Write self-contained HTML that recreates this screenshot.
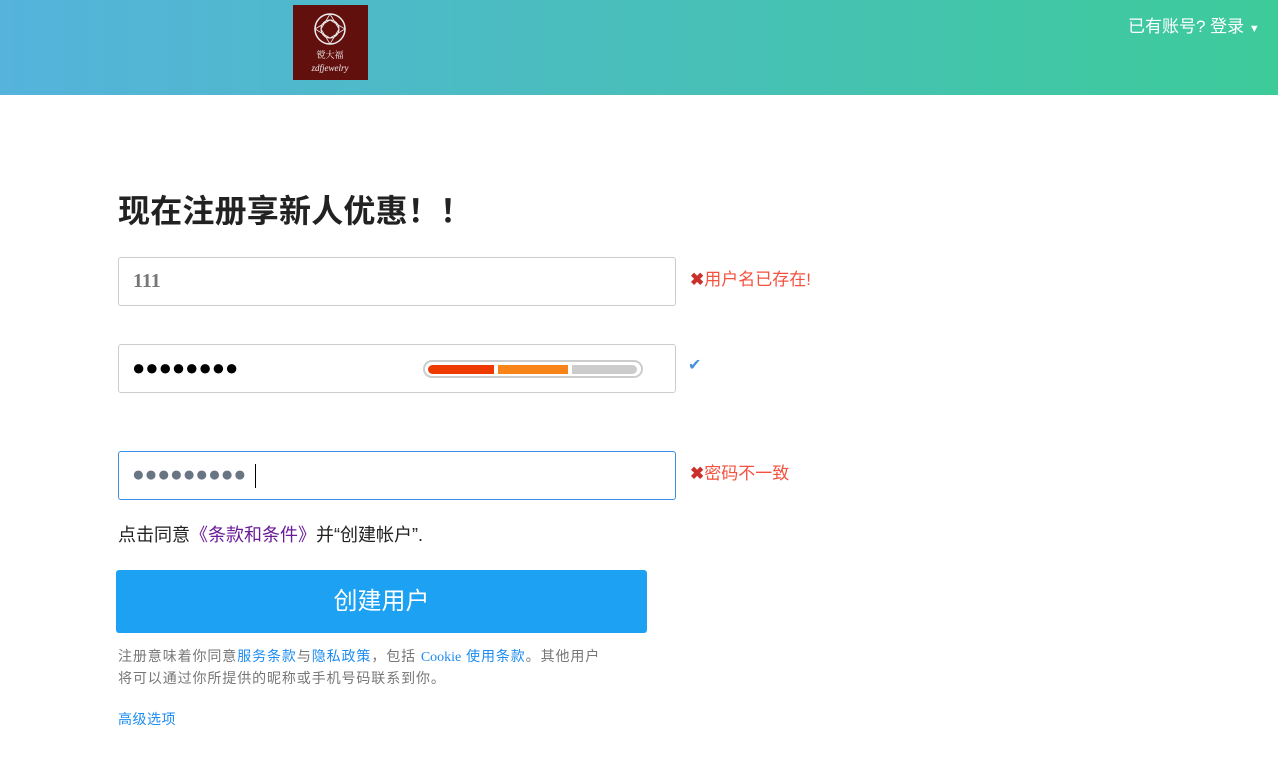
<!DOCTYPE html>
<html><head><meta charset="utf-8"><style>
body{margin:0;width:1278px;height:759px;background:#fff;font-family:"Liberation Sans","Noto Sans CJK SC",sans-serif;position:relative;overflow:hidden}
.hdr{position:absolute;left:0;top:0;width:1278px;height:95px;background:linear-gradient(90deg,#55b3dc,#3dcb9a)}
.logo{position:absolute;left:293px;top:5px;width:75px;height:75px;background:#62100e}
.abs{position:absolute}
.inp{position:absolute;left:118px;width:556px;height:47px;border:1px solid #ccc;border-radius:3px;background:#fff}
.err{color:#f4513e;font-size:17px}
.x{color:#c9302c;font-weight:bold}
</style></head><body>
<div class="hdr"></div>
<div class="logo"><svg width="75" height="75"><circle cx="37" cy="24" r="15" fill="none" stroke="#eee" stroke-width="1.5"/><circle cx="37" cy="24" r="9" fill="none" stroke="#eee" stroke-width="1"/><path d="M37 9 L46 24 L37 39 L28 24Z M22 24 L37 15 L52 24 L37 33Z" fill="none" stroke="#eee" stroke-width="0.8"/>
<text x="37" y="53" fill="#eee" font-size="9" text-anchor="middle" font-family="Noto Serif CJK SC,serif">镋大福</text><text x="37" y="66" fill="#eee" font-size="9" font-style="italic" text-anchor="middle" font-family="Liberation Serif,serif">zdfjewelry</text></svg></div>
<div class="abs" style="left:1128px;top:12px;color:#fff;font-size:17px">已有账号? 登录 <span style="font-size:11px">▼</span></div>
<div class="abs" style="left:118px;top:186px;font-size:32px;font-weight:bold;color:#222;letter-spacing:0.2px">现在注册享新人优惠！！</div>
<div class="inp" style="top:257px"><span class="abs" style="left:14px;top:12px;font-size:20px;color:#777;font-weight:bold;font-family:'Liberation Serif',serif">111</span></div>
<div class="abs err" style="left:690px;top:265px"><span class="x">✖</span>用户名已存在!</div>
<div class="inp" style="top:344px"><span class="abs" style="left:13px;top:10px;font-size:22px;color:#000;letter-spacing:0">●●●●●●●●</span>
<div class="abs" style="left:304px;top:15px;width:216px;height:14px;border:2px solid #ccc;border-radius:9px;background:#fff"></div>
<div class="abs" style="left:309px;top:20px;width:66px;height:9px;background:#ee3a00;border-radius:5px 0 0 5px"></div>
<div class="abs" style="left:379px;top:20px;width:70px;height:9px;background:#f8841a"></div>
<div class="abs" style="left:453px;top:20px;width:65px;height:9px;background:#ccc;border-radius:0 5px 5px 0"></div></div>
<div class="abs" style="left:688px;top:355px;color:#4a90d9;font-size:16px">✔</div>
<div class="inp" style="top:451px;border-color:#3a8ee6"><span class="abs" style="left:13px;top:11px;font-size:21px;color:#6a7584">●●●●●●●●●</span><span class="abs" style="left:136px;top:12px;width:1px;height:24px;background:#000"></span></div>
<div class="abs err" style="left:690px;top:459px"><span class="x">✖</span>密码不一致</div>
<div class="abs" style="left:118px;top:521px;font-size:18px;color:#222">点击同意<span style="color:#6a1b9a">《条款和条件》</span>并“创建帐户”.</div>
<div class="abs" style="left:116px;top:570px;width:531px;height:63px;background:#1da1f2;border-radius:3px;color:#fff;font-size:24px;text-align:center;line-height:63px">创建用户</div>
<div class="abs" style="left:118px;top:646px;font-size:14px;color:#777;line-height:20px;letter-spacing:0.9px">注册意味着你同意<span style="color:#1d8cf2">服务条款</span>与<span style="color:#1d8cf2">隐私政策</span>，包括 <span style="color:#1d8cf2"><span style="font-family:'Liberation Serif',serif;letter-spacing:0">Cookie</span> 使用条款</span>。其他用户<br>将可以通过你所提供的昵称或手机号码联系到你。</div>
<div class="abs" style="left:118px;top:709px;font-size:14px;color:#1d8cf2;letter-spacing:0.5px">高级选项</div>
</body></html>
